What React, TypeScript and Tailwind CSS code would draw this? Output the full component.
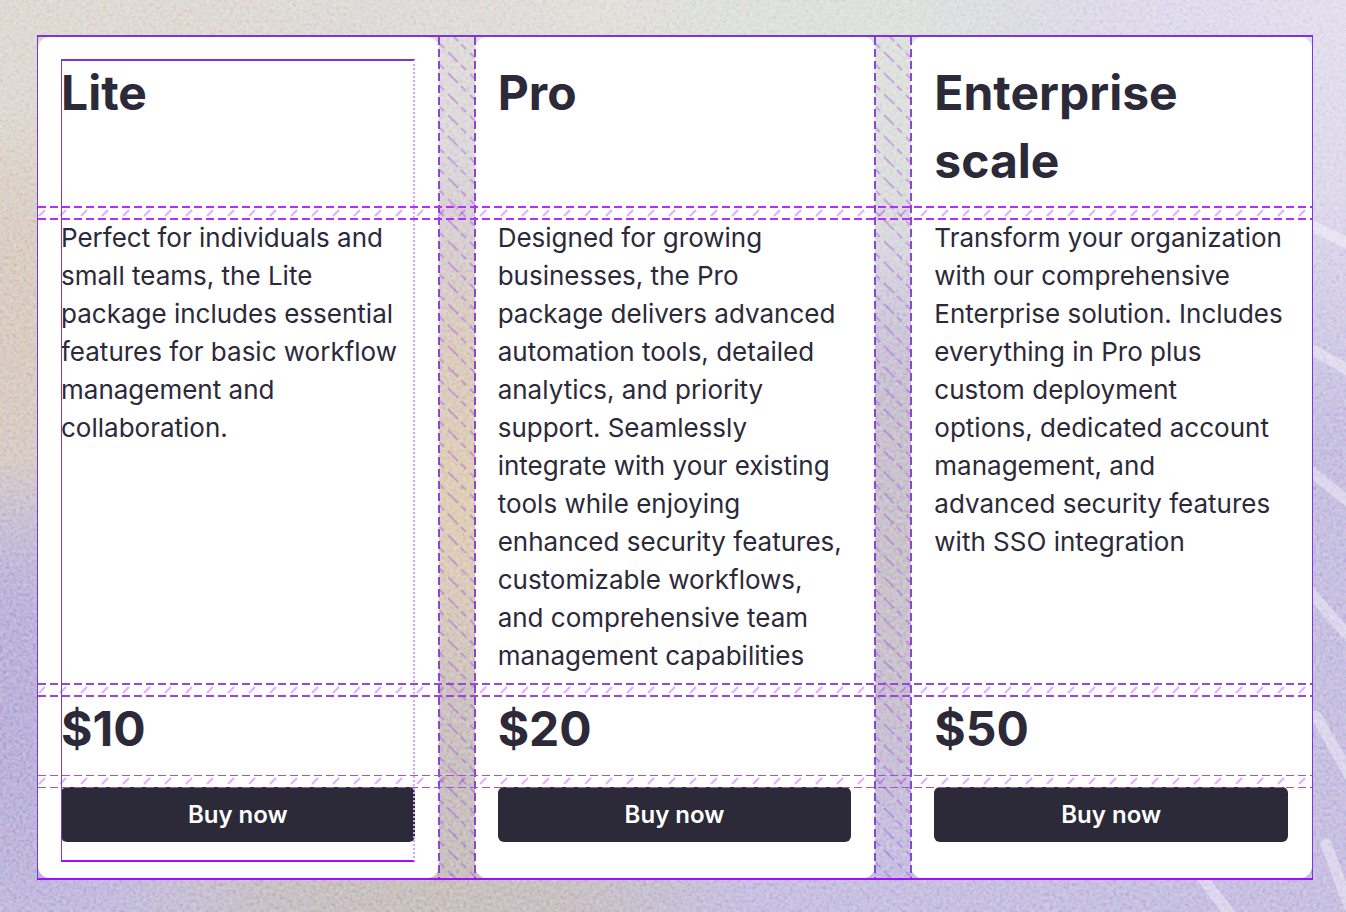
import React from 'react';
import clsx from 'clsx';

interface Plan {
  name: string;
  description: string[];
  price: string;
}

const plans: Plan[] = [
  {
    name: 'Lite',
    description: [
      'Perfect for individuals and',
      'small teams, the Lite',
      'package includes essential',
      'features for basic workflow',
      'management and',
      'collaboration.',
    ],
    price: '$10',
  },
  {
    name: 'Pro',
    description: [
      'Designed for growing',
      'businesses, the Pro',
      'package delivers advanced',
      'automation tools, detailed',
      'analytics, and priority',
      'support. Seamlessly',
      'integrate with your existing',
      'tools while enjoying',
      'enhanced security features,',
      'customizable workflows,',
      'and comprehensive team',
      'management capabilities',
    ],
    price: '$20',
  },
  {
    name: 'Enterprise scale',
    description: [
      'Transform your organization',
      'with our comprehensive',
      'Enterprise solution. Includes',
      'everything in Pro plus',
      'custom deployment',
      'options, dedicated account',
      'management, and',
      'advanced security features',
      'with SSO integration',
    ],
    price: '$50',
  },
];

const blobs = [
  { x: 0, y: 150, r: 460, color: '#dcd5cb' },
  { x: 120, y: 0, r: 420, color: '#e0dbd4' },
  { x: 600, y: 0, r: 420, color: '#e3e0da' },
  { x: 890, y: 60, r: 340, color: '#dfe3de' },
  { x: 890, y: 560, r: 300, color: '#cbc4cc' },
  { x: 20, y: 340, r: 240, color: '#dacdc2' },
  { x: 455, y: 500, r: 340, color: '#e0d0b8' },
  { x: 0, y: 720, r: 260, color: '#bcb2da' },
  { x: 430, y: 880, r: 320, color: '#cac2be' },
  { x: 1346, y: 0, r: 440, color: '#e4e0ee' },
];

const streaks = [
  'M1290 216L1350 244',
  'M1300 343L1350 371',
  'M1300 463L1350 503',
  'M1300 580L1350 638',
  'M1316 716L1350 776',
  'M1326 844L1350 908',
  'M1198 872L1234 920',
];

function Backdrop() {
  return (
    <svg
      className="absolute inset-0 h-full w-full"
      viewBox="0 0 1346 912"
      preserveAspectRatio="none"
      aria-hidden="true"
    >
      <defs>
        {blobs.map((b, i) => (
          <radialGradient key={i} id={`blob-${i}`}>
            <stop offset="0" stopColor={b.color} />
            <stop offset="0.45" stopColor={b.color} stopOpacity="0.8" />
            <stop offset="1" stopColor={b.color} stopOpacity="0" />
          </radialGradient>
        ))}
        <filter id="grain" x="0" y="0" width="100%" height="100%" colorInterpolationFilters="sRGB">
          <feTurbulence type="fractalNoise" baseFrequency="0.3" numOctaves="3" seed="4" />
          <feColorMatrix values="1.3 0.3 0.3 0 -0.45  0.3 1.3 0.3 0 -0.45  0.3 0.3 1.3 0 -0.45  0 0 0 0 0.5" />
        </filter>
      </defs>
      <rect width="1346" height="912" fill="#c8c1e2" />
      {blobs.map((b, i) => (
        <circle key={i} cx={b.x} cy={b.y} r={b.r} fill={`url(#blob-${i})`} />
      ))}
      {streaks.map((d) => (
        <path key={d} d={d} stroke="#fff" strokeOpacity="0.38" strokeWidth="11" strokeLinecap="round" />
      ))}
      <rect width="1346" height="912" filter="url(#grain)" className="mix-blend-soft-light" />
    </svg>
  );
}

// Dashed band over a row gap
function RowGuide({ id, color, thin, className }: { id: string; color: string; thin?: boolean; className: string }) {
  const weight = thin ? 1 : 2;
  return (
    <svg
      className={clsx('pointer-events-none z-10 col-span-full col-start-1 -mb-[13px] h-[14px] w-full self-end', className)}
      aria-hidden="true"
    >
      <defs>
        <pattern id={id} width="21" height="14" patternUnits="userSpaceOnUse">
          <path d="M1 10L7 4" stroke="#b01cff" strokeOpacity="0.36" strokeWidth="2" />
        </pattern>
      </defs>
      <rect width="100%" height="14" fill={`url(#${id})`} />
      <line x1="0" x2="100%" y1={thin ? 1.5 : 1} y2={thin ? 1.5 : 1} stroke={color} strokeWidth={weight} strokeDasharray="8 4" />
      <line x1="0" x2="100%" y1={thin ? 13.5 : 13} y2={thin ? 13.5 : 13} stroke={color} strokeWidth={weight} strokeDasharray="8 4" />
    </svg>
  );
}

// Hatched band over a column gap
function ColumnGuide({ id, className }: { id: string; className: string }) {
  return (
    <svg
      className={clsx('pointer-events-none z-10 row-span-4 row-start-1 -ml-[37px] h-full w-[38px]', className)}
      aria-hidden="true"
    >
      <defs>
        <pattern id={id} width="38" height="21" patternUnits="userSpaceOnUse">
          <g stroke="#a33be0" strokeOpacity="0.34" strokeWidth="2">
            <path d="M2 7L6 11M10 -6L20 4M10 15L20 25M23 7L28 12M32 16L37 21" />
          </g>
        </pattern>
      </defs>
      <rect width="38" height="100%" fill={`url(#${id})`} />
      <line x1="1" x2="1" y1="0" y2="100%" stroke="#8b46d4" strokeWidth="2" strokeDasharray="8 4" />
      <line x1="37" x2="37" y1="0" y2="100%" stroke="#8b46d4" strokeWidth="2" strokeDasharray="8 4" />
    </svg>
  );
}

function PlanCard({ plan, inspected, className }: { plan: Plan; inspected?: boolean; className: string }) {
  return (
    <article
      className={clsx(
        'relative row-span-4 row-start-1 grid grid-rows-subgrid rounded-xl bg-white pt-[22px] pr-6 pb-9 pl-[23px]',
        className
      )}
    >
      <h2 className="pb-3 text-[48px] leading-[68px] font-bold">{plan.name}</h2>
      <p className="pb-[9px] text-[26px] leading-[38px] whitespace-nowrap">
        {plan.description.map((line) => (
          <React.Fragment key={line}>
            {line}
            <br />
          </React.Fragment>
        ))}
      </p>
      <p className="pb-[13px] text-[48px] leading-[66px] font-bold">{plan.price}</p>
      <button
        type="button"
        className="h-[55px] w-full rounded-md bg-[#2c2938] text-[24px] leading-[32px] font-semibold text-white"
      >
        Buy now
      </button>
      {inspected && (
        <div className="pointer-events-none absolute top-[22px] right-6 bottom-4 left-[23px] border-t-2 border-r-2 border-b-2 border-l border-t-[#7c35d8] border-r-[#d3a5f8] border-b-[#a010ff] border-l-[#7c35d8] [border-right-style:dotted]" />
      )}
    </article>
  );
}

export default function App() {
  return (
    <main className="relative min-h-screen overflow-hidden pt-[35px] pr-[33px] pb-8 pl-[37px] font-['Inter',sans-serif] text-[#2c2938]">
      <Backdrop />
      <div className="relative grid grid-cols-3 grid-rows-[repeat(4,auto)] gap-x-9 gap-y-3 border-x border-y-2 border-x-[#7c35d8] border-t-[#7c35d8] border-b-[#a010ff]">
        <PlanCard plan={plans[0]} inspected className="col-start-1" />
        <PlanCard plan={plans[1]} className="col-start-2" />
        <PlanCard plan={plans[2]} className="col-start-3" />

        <ColumnGuide id="gutter-1" className="col-start-2" />
        <ColumnGuide id="gutter-2" className="col-start-3" />

        <RowGuide id="gap-1" color="#b52eff" className="row-start-1" />
        <RowGuide id="gap-2" color="#9448dd" className="row-start-2" />
        <RowGuide id="gap-3" color="#9b55dd" thin className="row-start-3" />
      </div>
    </main>
  );
}
